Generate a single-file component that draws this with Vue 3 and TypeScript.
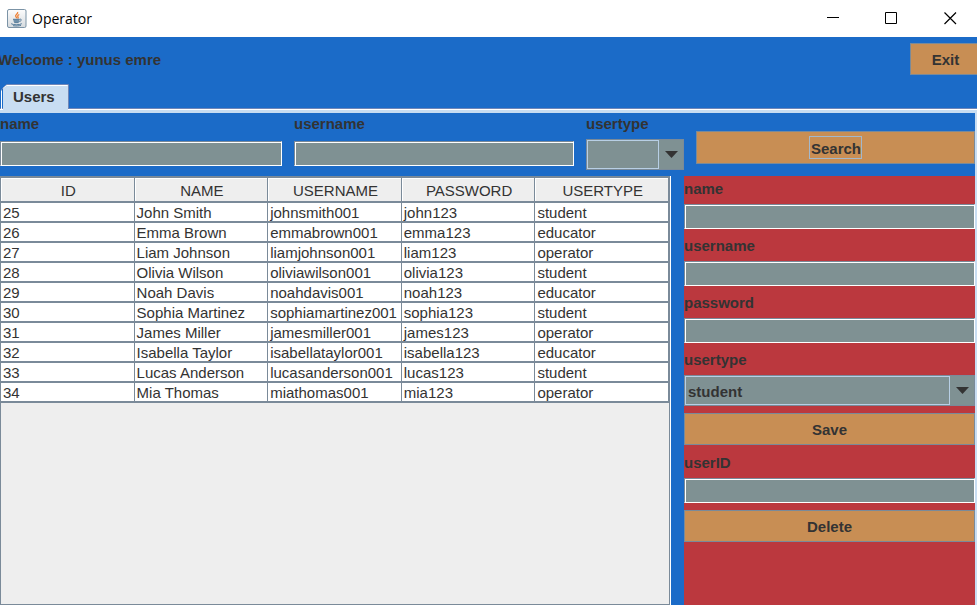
<script setup lang="ts">
import { reactive, ref } from 'vue'

interface User {
  id: number
  name: string
  username: string
  password: string
  usertype: string
}

const columns = ['ID', 'NAME', 'USERNAME', 'PASSWORD', 'USERTYPE']
const usertypes = ['student', 'educator', 'operator']

const users = ref<User[]>([
  { id: 25, name: 'John Smith', username: 'johnsmith001', password: 'john123', usertype: 'student' },
  { id: 26, name: 'Emma Brown', username: 'emmabrown001', password: 'emma123', usertype: 'educator' },
  { id: 27, name: 'Liam Johnson', username: 'liamjohnson001', password: 'liam123', usertype: 'operator' },
  { id: 28, name: 'Olivia Wilson', username: 'oliviawilson001', password: 'olivia123', usertype: 'student' },
  { id: 29, name: 'Noah Davis', username: 'noahdavis001', password: 'noah123', usertype: 'educator' },
  { id: 30, name: 'Sophia Martinez', username: 'sophiamartinez001', password: 'sophia123', usertype: 'student' },
  { id: 31, name: 'James Miller', username: 'jamesmiller001', password: 'james123', usertype: 'operator' },
  { id: 32, name: 'Isabella Taylor', username: 'isabellataylor001', password: 'isabella123', usertype: 'educator' },
  { id: 33, name: 'Lucas Anderson', username: 'lucasanderson001', password: 'lucas123', usertype: 'student' },
  { id: 34, name: 'Mia Thomas', username: 'miathomas001', password: 'mia123', usertype: 'operator' },
])

const filter = reactive({ name: '', username: '', usertype: '' })
const form = reactive({ name: '', username: '', password: '', usertype: 'student' })
const deleteId = ref('')
</script>

<template>
  <div class="window">
    <header class="titlebar">
      <svg class="app-icon" width="20" height="20" viewBox="0 0 20 20" aria-hidden="true">
        <defs>
          <linearGradient id="tile" x1="0" y1="0" x2="0" y2="1">
            <stop offset="0" stop-color="#fdfdfd" />
            <stop offset="1" stop-color="#d5dade" />
          </linearGradient>
        </defs>
        <rect x="0.5" y="0.5" width="18.5" height="18" rx="1.5" fill="url(#tile)" stroke="#7b93a6" />
        <path d="M10.600 3c1 1.700-2.800 2.600-1.900 4.300.3.700.9 1.200 1.100 1.900M12.300 5.500c-1.700.8-2 1.600-1.200 2.600.4.600 0 1.100-.5 1.500" fill="none" stroke="#ee8136" stroke-width="1.300" />
        <path d="M6 10.300h6.800l-.6 2.700H7z" fill="#8ba5b9" />
        <path d="M6 10.300h6.500M6.700 12h5.400M7.200 13.600h4.500M12.700 10.300c2-.7 2.400 1.500-.3 2.300M4.200 14.700c2 1.400 8 1.500 10.600 0M6 16.700c2.700.5 6 .3 8-.4" fill="none" stroke="#537a99" stroke-width="1" />
      </svg>
      <span class="title">Operator</span>
      <div class="window-buttons">
        <button type="button" aria-label="Minimize">
          <svg width="14" height="13" viewBox="0 0 14 13"><path d="M0 5.500h12" stroke="#000" /></svg>
        </button>
        <button type="button" aria-label="Maximize">
          <svg width="14" height="13" viewBox="0 0 14 13"><path d="M.5.500h11v11H.5z" fill="none" stroke="#000" /></svg>
        </button>
        <button type="button" aria-label="Close">
          <svg width="13" height="13" viewBox="0 0 13 13"><path d="M.5.500l11.500 11.500M12 .5L.5 12" stroke="#000" stroke-width="1.200" /></svg>
        </button>
      </div>
    </header>

    <div class="banner">
      <span class="welcome">Welcome : yunus emre</span>
      <button type="button" class="button exit">Exit</button>
    </div>

    <div class="tabs" role="tablist">
      <button type="button" class="tab" role="tab" aria-selected="true">
        <svg class="tab-shape" width="70" height="26" viewBox="0 0 70 26" aria-hidden="true">
          <path d="M3 26V5l4-4h61v25z" fill="#c8ddf2" />
          <path d="M1.500 25V5.500l5-5H68.500V25" fill="none" stroke="#6f86b8" />
          <path d="M1.500 25V6.500M3 4.500L6.500 1.500H67.500" fill="none" stroke="#fff" />
        </svg>
        <span class="tab-label">Users</span>
      </button>
    </div>

    <main class="pane">
      <form class="search" @submit.prevent>
        <div class="field">
          <label for="filter-name">name</label>
          <input id="filter-name" v-model="filter.name" class="text" type="text" />
        </div>
        <div class="field">
          <label for="filter-username">username</label>
          <input id="filter-username" v-model="filter.username" class="text" type="text" />
        </div>
        <div class="field choice">
          <label for="filter-usertype">usertype</label>
          <div class="combo">
            <span class="combo-frame"></span>
            <svg class="arrow" width="13" height="7" viewBox="0 0 13 7" aria-hidden="true"><path d="M0 0h13L6.500 7z" fill="#333" /></svg>
            <select id="filter-usertype" v-model="filter.usertype">
              <option value=""></option>
              <option v-for="type in usertypes" :key="type" :value="type">{{ type }}</option>
            </select>
          </div>
        </div>
        <button type="submit" class="button search-button"><span class="focus">Search</span></button>
      </form>

      <div class="content">
        <div class="table-view">
          <table>
            <thead>
              <tr>
                <th v-for="column in columns" :key="column" scope="col">{{ column }}</th>
              </tr>
            </thead>
            <tbody>
              <tr v-for="user in users" :key="user.id">
                <td>{{ user.id }}</td>
                <td>{{ user.name }}</td>
                <td>{{ user.username }}</td>
                <td>{{ user.password }}</td>
                <td>{{ user.usertype }}</td>
              </tr>
            </tbody>
          </table>
        </div>

        <aside class="side">
          <form class="group" @submit.prevent>
            <div class="field">
              <label for="user-name">name</label>
              <input id="user-name" v-model="form.name" class="text" type="text" />
            </div>
            <div class="field">
              <label for="user-username">username</label>
              <input id="user-username" v-model="form.username" class="text" type="text" />
            </div>
            <div class="field">
              <label for="user-password">password</label>
              <input id="user-password" v-model="form.password" class="text" type="text" />
            </div>
            <div class="field">
              <label for="user-usertype">usertype</label>
              <div class="combo">
                <span class="combo-frame"></span>
                <svg class="arrow" width="13" height="7" viewBox="0 0 13 7" aria-hidden="true"><path d="M0 0h13L6.500 7z" fill="#333" /></svg>
                <select id="user-usertype" v-model="form.usertype">
                  <option v-for="type in usertypes" :key="type" :value="type">{{ type }}</option>
                </select>
              </div>
            </div>
            <button type="submit" class="button">Save</button>
          </form>
          <form class="group" @submit.prevent>
            <div class="field">
              <label for="user-id">userID</label>
              <input id="user-id" v-model="deleteId" class="text" type="text" />
            </div>
            <button type="submit" class="button">Delete</button>
          </form>
        </aside>
      </div>
    </main>
  </div>
</template>

<style>
body {
  margin: 0;
}
</style>

<style scoped>
* {
  box-sizing: border-box;
}

.window {
  display: flex;
  flex-direction: column;
  min-height: 100vh;
  overflow: hidden;
  background: #1b6bc8;
  color: #333;
  font: bold 15px/20px "Liberation Sans", Arial, sans-serif;
}

button,
input,
select {
  margin: 0;
  font: inherit;
  color: inherit;
  border-radius: 0;
}

.titlebar {
  display: flex;
  align-items: center;
  height: 37px;
  padding-left: 7px;
  background: #fff;
}

.title {
  margin-left: 5px;
  color: #000;
  font: 14px/20px "Open Sans", "Noto Sans", sans-serif;
}

.window-buttons {
  display: flex;
  gap: 4px;
  margin-left: auto;
}

.window-buttons button {
  display: grid;
  place-items: center;
  width: 54px;
  height: 37px;
  padding: 0;
  border: 0;
  background: none;
}

.banner {
  display: flex;
  align-items: center;
  justify-content: space-between;
  padding: 6px 0 9px;
}

.welcome {
  margin-left: -2px;
  padding-top: 2px;
}

.button {
  display: flex;
  align-items: center;
  justify-content: center;
  height: 32px;
  padding: 2px 20px 0;
  border: 1px solid #7a8a99;
  background: #c88e54;
}

.exit {
  margin-right: -4px;
  width: 71px;
}

.tabs {
  display: flex;
  height: 26px;
  box-shadow: inset 0 -1px #fff, inset 0 -2px #6f86b8;
}

.tab {
  position: relative;
  width: 70px;
  height: 26px;
  padding: 0 0 0 13px;
  border: 0;
  background: none;
  text-align: left;
}

.tab-shape {
  position: absolute;
  inset: 0;
}

.tab-label {
  position: relative;
}

.pane {
  display: flex;
  flex: 1;
  flex-direction: column;
  border-top: 3px solid #c8ddf2;
  border-right: 2px solid #c8ddf2;
}

.search {
  display: grid;
  grid-template-columns: 282fr 280fr 98px 279fr;
  column-gap: 12px;
  height: 63px;
  padding-top: 1px;
}

.field {
  display: flex;
  flex-direction: column;
  gap: 5px;
}

.search .field {
  gap: 7px;
}

.search .choice {
  gap: 5px;
}

.text {
  display: block;
  width: 100%;
  height: 25px;
  padding: 0 2px;
  border: 1px solid;
  border-color: #7a8a99 #fff #fff #7a8a99;
  background: #7f9193;
  box-shadow: inset 1px 1px #fff;
  outline: 0;
}

.combo {
  display: grid;
  grid-template-columns: 1fr 24px;
  align-items: center;
  height: 31px;
  border: 1px solid #7a8a99;
  background: #7f9193;
}

.combo-frame {
  grid-area: 1 / 1;
  align-self: stretch;
  border: 1px solid #b8cfe5;
}

.arrow {
  grid-area: 1 / 2;
  justify-self: center;
}

.combo select {
  grid-area: 1 / 1 / 2 / 3;
  width: 100%;
  height: 29px;
  padding: 2px 3px 0;
  border: 0;
  background: transparent;
  appearance: none;
  outline: 0;
}

.search-button {
  height: 33px;
  margin-top: 17px;
  padding-top: 0;
}

.focus {
  padding: 2px 0 0 1px;
  border: 1px solid #a3b8cc;
  line-height: 19px;
}

.content {
  display: grid;
  flex: 1;
  grid-template-columns: 671fr 291fr;
  column-gap: 13px;
}

.table-view {
  margin-right: 1px;
  border: 1px solid #7a8a99;
  border-top-width: 2px;
  background: #eee;
  box-shadow: 1px 0 #fff;
}

table {
  width: 100%;
  table-layout: fixed;
  border-collapse: separate;
  border-spacing: 0;
  font-weight: normal;
}

th,
td {
  overflow: hidden;
  border-right: 1px solid #7a8a99;
  border-bottom: 2px solid #7a8a99;
  white-space: nowrap;
}

th {
  height: 25px;
  padding: 3px 0 0 2px;
  background: #eee;
  box-shadow: inset 1px 1px #fff;
  font-weight: normal;
  text-align: center;
}

td {
  height: 20px;
  padding: 2px 0 0 2px;
  background: #fff;
  line-height: 16px;
}

.side {
  display: flex;
  flex-direction: column;
  gap: 8px;
  padding-top: 3px;
  background: #bb383e;
}

.group {
  display: flex;
  flex-direction: column;
  gap: 7px;
}
</style>
